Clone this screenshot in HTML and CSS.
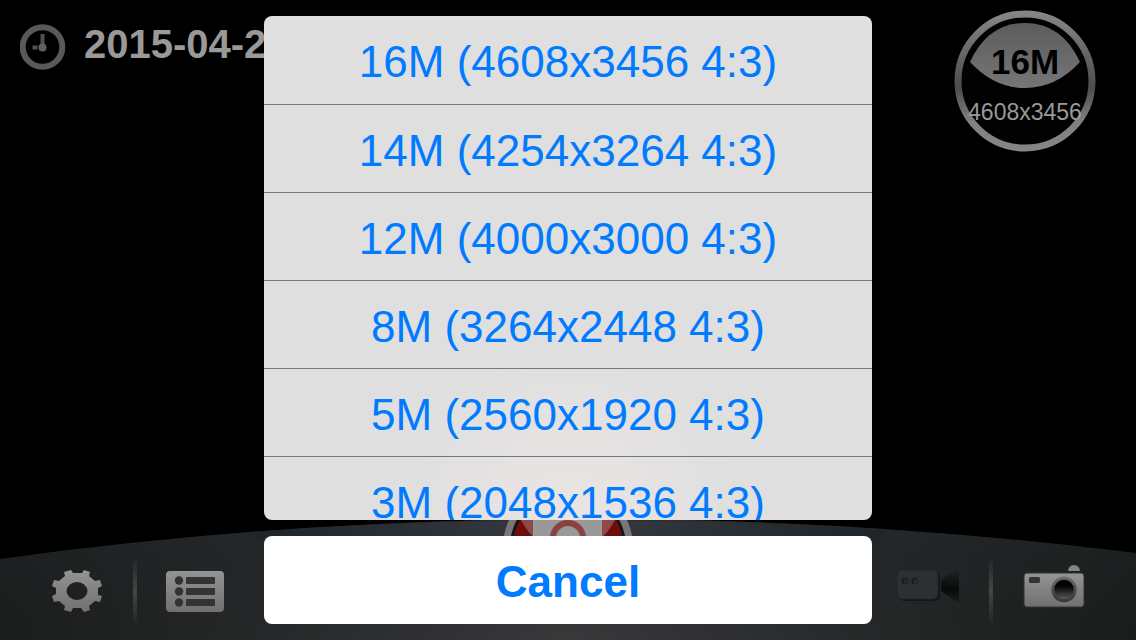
FILE: index.html
```html
<!DOCTYPE html>
<html lang="en">
<head>
<meta charset="utf-8">
<meta name="viewport" content="width=device-width, initial-scale=1">
<title>Photo size</title>
<link rel="stylesheet" href="styles.css">
</head>
<body>
<div class="camera">
  <header class="status">
    <div class="clock">
      <svg class="clock-icon" viewBox="0 0 46 46" aria-hidden="true">
        <circle cx="22.500" cy="23" r="19.800" fill="none" stroke="#59595b" stroke-width="6"/>
        <path d="M22.500 10v12M12.500 23.500h5" stroke="#505050" stroke-width="4"/>
        <circle cx="22.500" cy="23.500" r="4" fill="#606060"/>
      </svg>
      <time class="date">2015-04-2</time>
    </div>
    <button class="size-badge" type="button">
      <svg class="size-ring" viewBox="0 0 142 142" aria-hidden="true">
        <defs>
          <linearGradient id="ring" x1="0" y1="0" x2="0" y2="1">
            <stop offset="0" stop-color="#858585"/>
            <stop offset=".55" stop-color="#4c4c4c"/>
            <stop offset=".8" stop-color="#808080"/>
            <stop offset="1" stop-color="#858585"/>
          </linearGradient>
          <linearGradient id="lens" x1="0" y1="0" x2="0" y2="1">
            <stop offset="0" stop-color="#5c5c5c"/>
            <stop offset="1" stop-color="#767676"/>
          </linearGradient>
        </defs>
        <circle cx="71" cy="71" r="67" fill="#020202" stroke="url(#ring)" stroke-width="7"/>
        <path d="M16 52Q34 13 71 13T126 52Q102 78 71 78T16 52Z" fill="url(#lens)"/>
      </svg>
      <span class="size-name">16M</span>
      <span class="size-pixels">4608x3456</span>
    </button>
  </header>

  <footer class="dock">
    <svg class="dock-back" viewBox="0 0 1136 120" preserveAspectRatio="none" aria-hidden="true">
      <defs>
        <linearGradient id="dockFill" x1="0" y1="0" x2="1" y2="0">
          <stop offset="0" stop-color="#1b1d1d"/>
          <stop offset=".22" stop-color="#262829"/>
          <stop offset=".5" stop-color="#3c3c3e"/>
          <stop offset=".78" stop-color="#262829"/>
          <stop offset="1" stop-color="#1a1c1b"/>
        </linearGradient>
        <linearGradient id="dockShade" x1="0" y1="0" x2="0" y2="1">
          <stop offset="0" stop-color="#20282c" stop-opacity=".5"/>
          <stop offset="1" stop-color="#1d1d1d" stop-opacity=".1"/>
        </linearGradient>
        <linearGradient id="panel" x1="0" y1="0" x2="1" y2="0">
          <stop offset="0" stop-color="#1e2427"/>
          <stop offset=".4" stop-color="#32373d"/>
          <stop offset=".6" stop-color="#32373d"/>
          <stop offset="1" stop-color="#1e2427"/>
        </linearGradient>
      </defs>
      <path d="M0 39Q560-38 1136 33V120H0Z" fill="url(#dockFill)"/>
      <path d="M0 39Q560-38 1136 33V120H0Z" fill="url(#dockShade)"/>
      <path d="M252 12Q568-10 886 10Q880 21 870 27H268Q258 20 252 12Z" fill="url(#panel)"/>
    </svg>
    <div class="dock-group">
      <button class="tool" type="button" aria-label="Settings">
        <svg width="54" height="46" viewBox="0 0 54 46" aria-hidden="true">
          <defs>
            <linearGradient id="metal" x1="0" y1="0" x2="0" y2="1">
              <stop offset="0" stop-color="#949494"/>
              <stop offset="1" stop-color="#707070"/>
            </linearGradient>
          </defs>
          <path fill="url(#metal)" fill-rule="evenodd" d="M13 4L20 2L22 5H31L33 2L39 4L38 8L44 13L49 12L51 18L47 20V27L51 28L49 34L44 33L38 38L39 42L33 44L30 40H22L20 44L13 42L14 38L8 33L3 34L1 28L5 26V20L1 18L3 12L8 13L14 8ZM26 14A10.500 9 0 1 0 26 32A10.500 9 0 1 0 26 14Z"/>
        </svg>
      </button>
      <span class="divider"></span>
      <button class="tool" type="button" aria-label="Gallery list">
        <svg width="60" height="44" viewBox="0 0 60 44" aria-hidden="true">
          <rect x="1" y="2" width="58" height="41" rx="4" fill="url(#metal)"/>
          <g fill="#333">
            <circle cx="14" cy="11.500" r="4.200"/><rect x="21" y="8" width="29" height="7" rx="1"/>
            <circle cx="14" cy="22.500" r="4.200"/><rect x="21" y="19" width="29" height="7" rx="1"/>
            <circle cx="14" cy="33.500" r="4.200"/><rect x="21" y="30" width="29" height="7" rx="1"/>
          </g>
        </svg>
      </button>
    </div>
    <div class="dock-group dock-modes">
      <button class="tool tool-raised" type="button" aria-label="Video">
        <svg width="64" height="36" viewBox="0 0 64 36" aria-hidden="true">
          <defs>
            <linearGradient id="horn" x1="0" y1="0" x2="0" y2="1">
              <stop offset="0" stop-color="#222426"/>
              <stop offset=".6" stop-color="#090a0a"/>
              <stop offset="1" stop-color="#1c1d1e"/>
            </linearGradient>
          </defs>
          <rect x="4" y="4" width="41" height="29" rx="5" fill="#141617"/>
          <rect x="2" y="2" width="41" height="29" rx="5" fill="#2d3033" stroke="#222527"/>
          <circle cx="10" cy="13" r="3.500" fill="#191b1c"/><circle cx="11" cy="13.500" r="2.500" fill="#27292b"/>
          <circle cx="20" cy="13" r="3.500" fill="#191b1c"/><circle cx="21" cy="13.500" r="2.500" fill="#27292b"/>
          <path d="M46 12L64 0V35L46 23Z" fill="url(#horn)"/>
        </svg>
      </button>
      <span class="divider"></span>
      <button class="tool tool-raised" type="button" aria-label="Photo">
        <svg width="62" height="44" viewBox="0 0 62 44" aria-hidden="true">
          <defs>
            <linearGradient id="glass" x1="0" y1="0" x2="0" y2="1">
              <stop offset=".35" stop-color="#030303"/>
              <stop offset="1" stop-color="#636363"/>
            </linearGradient>
            <linearGradient id="rim" x1="0" y1="0" x2="0" y2="1">
              <stop offset="0" stop-color="#686868"/>
              <stop offset="1" stop-color="#383838"/>
            </linearGradient>
          </defs>
          <path d="M45 7A6 6 0 0 1 57 7Z" fill="#858585"/>
          <rect x="1" y="9" width="60" height="34" rx="3" fill="url(#metal)" stroke="#333"/>
          <rect x="6" y="13" width="11" height="6" rx="1.500" fill="#333"/>
          <circle cx="41" cy="25.500" r="11.300" fill="url(#glass)" stroke="url(#rim)" stroke-width="3"/>
        </svg>
      </button>
    </div>
  </footer>
</div>

<div class="overlay">
  <svg class="shutter" viewBox="0 0 130 130" aria-hidden="true">
    <defs>
      <clipPath id="disc"><circle cx="65" cy="65" r="55"/></clipPath>
    </defs>
    <circle cx="65" cy="65" r="65" fill="#777"/>
    <circle cx="65" cy="65" r="58" fill="#171717"/>
    <g clip-path="url(#disc)">
      <rect width="130" height="130" fill="#700c0c"/>
      <ellipse cx="65" cy="0" rx="56" ry="70" fill="#8e4a4a"/>
      <rect x="30" width="69" height="130" fill="#999"/>
      <circle cx="65" cy="56" r="15" fill="none" stroke="#8b4040" stroke-width="6"/>
    </g>
  </svg>
  <div class="sheet" role="dialog" aria-label="Photo size">
    <div class="options">
      <button class="option" type="button">16M (4608x3456 4:3)</button>
      <button class="option" type="button">14M (4254x3264 4:3)</button>
      <button class="option" type="button">12M (4000x3000 4:3)</button>
      <button class="option" type="button">8M (3264x2448 4:3)</button>
      <button class="option" type="button">5M (2560x1920 4:3)</button>
      <button class="option" type="button">3M (2048x1536 4:3)</button>
    </div>
    <button class="cancel" type="button">Cancel</button>
  </div>
</div>
</body>
</html>
```
FILE: styles.css
```css
* {
  box-sizing: border-box;
}

body {
  margin: 0;
  background: #000;
  font-family: "Liberation Sans", Arial, sans-serif;
}

button {
  padding: 0;
  border: 0;
  background: none;
  color: inherit;
  font: inherit;
  cursor: pointer;
}

svg {
  display: block;
}

.camera {
  display: flex;
  flex-direction: column;
  justify-content: space-between;
  height: 100vh;
  overflow: hidden;
}

.status {
  display: flex;
  justify-content: space-between;
  align-items: flex-start;
  padding: 10px 40px 0 20px;
}

.clock {
  display: flex;
  align-items: center;
  gap: 18px;
  padding-top: 12px;
}

.clock-icon {
  width: 46px;
  height: 46px;
}

.date {
  padding-bottom: 5px;
  color: #999;
  font-size: 40px;
  font-weight: 700;
  line-height: 44px;
}

.size-badge {
  display: grid;
  grid-template: 32px 40px 12px 36px 22px / 142px;
  justify-items: center;
}

.size-ring {
  grid-area: 1 / 1 / 6 / 2;
  width: 142px;
  height: 142px;
}

.size-name {
  grid-area: 2 / 1;
  z-index: 1;
  color: #000;
  font-size: 35px;
  font-weight: 700;
  line-height: 40px;
}

.size-pixels {
  grid-area: 4 / 1;
  z-index: 1;
  color: #999;
  font-size: 23px;
  line-height: 36px;
}

.dock {
  position: relative;
  display: flex;
  justify-content: space-between;
  align-items: flex-end;
  height: 120px;
  padding: 0 51px 14px;
}

.dock-back {
  position: absolute;
  inset: 0;
  width: 100%;
  height: 100%;
}

.dock-group {
  position: relative;
  display: flex;
  align-items: center;
  gap: 28px;
}

.dock-modes {
  gap: 30px;
}

.divider {
  width: 4px;
  height: 70px;
  background: linear-gradient(transparent, #454747, transparent);
}

.tool-raised {
  padding-bottom: 10px;
}

.overlay {
  position: absolute;
  inset: 0;
  display: flex;
  justify-content: center;
  padding: 16px;
}

.shutter {
  position: absolute;
  bottom: 28px;
  left: 50%;
  width: 130px;
  margin-left: -65px;
}

.sheet {
  position: relative;
  display: flex;
  flex-direction: column;
  gap: 16px;
  width: 608px;
}

.options {
  flex: 1;
  min-height: 0;
  overflow-y: auto;
  scrollbar-width: none;
  border-radius: 8px;
  background: radial-gradient(circle 180px at 50% 100%, #eae5e4, #dfdfdf);
}

.option {
  display: block;
  width: 100%;
  height: 88px;
  padding-top: 4px;
  color: #007aff;
  font-size: 44px;
  line-height: 52px;
}

.option + .option {
  border-top: 1px solid #777;
}

.cancel {
  height: 88px;
  padding-top: 4px;
  border-radius: 8px;
  background: #fff;
  color: #007aff;
  font-size: 44px;
  font-weight: 700;
  line-height: 52px;
}
```
